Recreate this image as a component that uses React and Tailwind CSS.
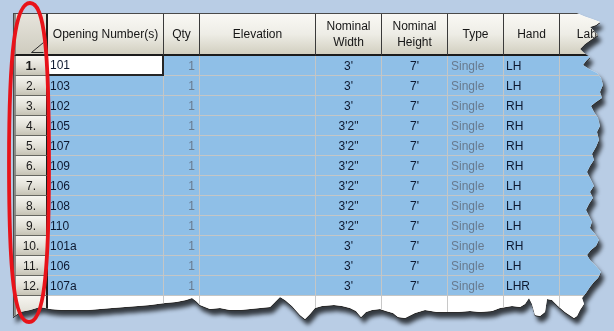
const rows = [
  ["101", "3'", "LH"],
  ["103", "3'", "LH"],
  ["102", "3'", "RH"],
  ["105", "3'2\"", "RH"],
  ["107", "3'2\"", "RH"],
  ["109", "3'2\"", "RH"],
  ["106", "3'2\"", "LH"],
  ["108", "3'2\"", "LH"],
  ["110", "3'2\"", "LH"],
  ["101a", "3'", "RH"],
  ["106", "3'", "LH"],
  ["107a", "3'", "LHR"],
];

const hdr =
  "shrink-0 h-full flex items-center justify-center text-center leading-[16px] border-r border-b-2 border-r-[#3a3a3a] border-b-[#1c1c1c] bg-linear-to-b from-[#f9f8f4] via-[#eeede6] to-[#d2cfc0] text-[#161616]";
const cell =
  "shrink-0 h-full flex items-center border-r border-b border-[#c4c6c6] bg-[#8fbfe7] text-[#0e1930]";
const rowHead =
  "shrink-0 w-[34px] h-full flex items-center justify-center border-l-2 border-l-[#8a8a87] border-r-2 border-r-[#1c1c1c] border-b border-b-[#666661] bg-linear-to-b from-[#f6f5f0] via-[#e3e1d8] to-[#c6c3b5] text-[#1a1a1a]";
const blank = "shrink-0 h-full border-r border-[#c8c8c8] bg-white";

export default function App() {
  return (
    <div className="relative w-[614px] h-[331px] overflow-hidden bg-[#b9cde5] font-['Liberation_Sans',Arial,sans-serif] text-[12px]">
      <div className="[filter:drop-shadow(0_1px_0_#2b2b2b)_drop-shadow(3px_5px_2px_rgba(0,0,0,0.72))]">
        <div className="w-[614px] h-[331px] overflow-hidden pl-[13px] pt-[13px] [clip-path:polygon(13px_13px,577px_13px,581px_15px,586px_17px,592px_19px,600px_22px,596px_25px,590px_27px,594px_31px,598px_35px,592px_39px,585px_44px,580px_49px,584px_53px,590px_57px,586px_61px,583px_65px,589px_69px,597px_73px,601px_78px,603px_85px,600px_92px,602px_98px,596px_102px,591px_106px,594px_112px,598px_118px,600px_126px,597px_132px,599px_140px,596px_147px,592px_154px,594px_160px,590px_166px,587px_172px,590px_178px,594px_186px,590px_192px,593px_198px,589px_204px,586px_210px,589px_216px,592px_222px,590px_228px,595px_234px,599px_240px,596px_246px,591px_250px,587px_255px,590px_260px,596px_266px,601px_272px,598px_278px,594px_282px,590px_287px,586px_293px,582px_298px,584px_304px,580px_310px,577px_316px,574px_318px,565px_312px,558px_306px,552px_300px,547px_299px,545px_312px,540px_316px,535px_315px,532px_304px,529px_298px,525px_304px,520px_307px,512px_306px,506px_307px,500px_308px,492px_311px,480px_312px,470px_311px,458px_312px,447px_312px,437px_312px,425px_310px,415px_313px,405px_318px,398px_317px,393px_313px,386px_311px,380px_309px,372px_310px,366px_312px,361px_317px,356px_311px,350px_308px,342px_306px,334px_305px,322px_306px,315px_308px,310px_314px,305px_319px,300px_315px,292px_306px,285px_300px,280px_297px,276px_301px,270px_307px,260px_308px,250px_309px,240px_310px,230px_310px,220px_308px,210px_309px,200px_305px,196px_301px,192px_298px,186px_300px,176px_302px,165px_303px,150px_305px,138px_306px,125px_307px,112px_308px,100px_309px,88px_310px,75px_310px,62px_310px,50px_309px,40px_307px,30px_310px,20px_312px,13px_317px)]">
          <div className="w-[640px] border-l border-t border-[#4a4a4a] bg-white">
            <div className="flex h-[42px]">
              <div className="shrink-0 w-[34px] h-full flex items-end justify-end pr-[2px] pb-[1px] border-l-2 border-l-[#8a8a87] border-r-2 border-r-[#1c1c1c] border-b-2 border-b-[#1c1c1c] bg-linear-to-b from-[#e6e4dc] to-[#cfccbf]">
                <svg width="13" height="11" viewBox="0 0 13 11">
                  <path d="M0.5 10.5 L12.5 10.5 M0.5 10.5 L12.5 0.5" stroke="#2a2a2a" strokeWidth="1" fill="none" />
                </svg>
              </div>
              <div className={`${hdr} w-[116px]`}>Opening Number(s)</div>
              <div className={`${hdr} w-[36px]`}>Qty</div>
              <div className={`${hdr} w-[116px]`}>Elevation</div>
              <div className={`${hdr} w-[66px]`}>
                Nominal
                <br />
                Width
              </div>
              <div className={`${hdr} w-[66px]`}>
                Nominal
                <br />
                Height
              </div>
              <div className={`${hdr} w-[56px]`}>Type</div>
              <div className={`${hdr} w-[56px]`}>Hand</div>
              <div className={`${hdr} w-[64px]`}>Label</div>
            </div>
            {rows.map((r, i) => (
              <div key={i} className="flex h-[20px]">
                <div className={rowHead}>
                  <span className={i === 0 ? "font-bold text-[13px]" : ""}>{i + 1}.</span>
                </div>
                {i === 0 ? (
                  <div className="shrink-0 h-full w-[116px] flex items-center pl-[2px] bg-white border-r-2 border-b-2 border-[#262626] text-[#0e1930]">
                    {r[0]}
                  </div>
                ) : (
                  <div className={`${cell} w-[116px] pl-[2px]`}>{r[0]}</div>
                )}
                <div className={`${cell} w-[36px] justify-end pr-[4px] text-[#687a8e]`}>1</div>
                <div className={`${cell} w-[116px]`}></div>
                <div className={`${cell} w-[66px] justify-center`}>{r[1]}</div>
                <div className={`${cell} w-[66px] justify-center`}>7'</div>
                <div className={`${cell} w-[56px] pl-[3px] text-[#687a8e]`}>Single</div>
                <div className={`${cell} w-[56px] pl-[2px]`}>{r[2]}</div>
                <div className={`${cell} w-[64px]`}></div>
              </div>
            ))}
            <div className="flex h-[32px]">
              <div className="shrink-0 w-[34px] h-full border-l-2 border-l-[#8a8a87] border-r-2 border-r-[#1c1c1c] bg-linear-to-b from-[#f6f5f0] via-[#e3e1d8] to-[#c6c3b5]"></div>
              <div className={`${blank} w-[116px]`}></div>
              <div className={`${blank} w-[36px]`}></div>
              <div className={`${blank} w-[116px]`}></div>
              <div className={`${blank} w-[66px]`}></div>
              <div className={`${blank} w-[66px]`}></div>
              <div className={`${blank} w-[56px]`}></div>
              <div className={`${blank} w-[56px]`}></div>
              <div className={`${blank} w-[64px]`}></div>
            </div>
          </div>
        </div>
      </div>
      <svg className="absolute left-0 top-0 pointer-events-none" width="614" height="331" viewBox="0 0 614 331">
        <path
          d="M30 3 C44.4 3 49 48.5 49 163 C49 277.5 43.4 322 29 322 C14.6 322 9 277.5 9 163 C9 48.5 15.6 3 30 3 Z"
          stroke="#e8131a"
          strokeWidth="3.8"
          fill="none"
        />
      </svg>
    </div>
  );
}
